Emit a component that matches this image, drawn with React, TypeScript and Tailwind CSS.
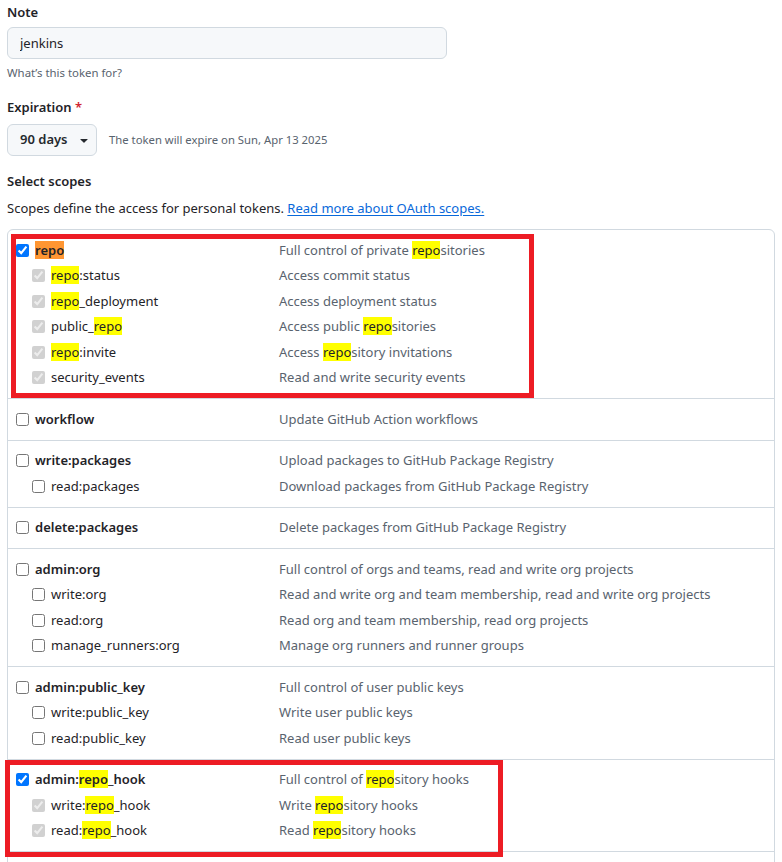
import type { ReactNode } from "react";

type Row = { name: string; desc: string; sub?: boolean; state?: "on" | "off" | "locked" };
type Group = { rows: Row[]; box?: "repo" | "hook" };

const groups: Group[] = [
  {
    box: "repo",
    rows: [
      { name: "{repo}", desc: "Full control of private [repo]sitories", state: "on" },
      { name: "[repo]:status", desc: "Access commit status", sub: true, state: "locked" },
      { name: "[repo]_deployment", desc: "Access deployment status", sub: true, state: "locked" },
      { name: "public_[repo]", desc: "Access public [repo]sitories", sub: true, state: "locked" },
      { name: "[repo]:invite", desc: "Access [repo]sitory invitations", sub: true, state: "locked" },
      { name: "security_events", desc: "Read and write security events", sub: true, state: "locked" },
    ],
  },
  { rows: [{ name: "workflow", desc: "Update GitHub Action workflows" }] },
  {
    rows: [
      { name: "write:packages", desc: "Upload packages to GitHub Package Registry" },
      { name: "read:packages", desc: "Download packages from GitHub Package Registry", sub: true },
    ],
  },
  { rows: [{ name: "delete:packages", desc: "Delete packages from GitHub Package Registry" }] },
  {
    rows: [
      { name: "admin:org", desc: "Full control of orgs and teams, read and write org projects" },
      { name: "write:org", desc: "Read and write org and team membership, read and write org projects", sub: true },
      { name: "read:org", desc: "Read org and team membership, read org projects", sub: true },
      { name: "manage_runners:org", desc: "Manage org runners and runner groups", sub: true },
    ],
  },
  {
    rows: [
      { name: "admin:public_key", desc: "Full control of user public keys" },
      { name: "write:public_key", desc: "Write user public keys", sub: true },
      { name: "read:public_key", desc: "Read user public keys", sub: true },
    ],
  },
  {
    box: "hook",
    rows: [
      { name: "admin:[repo]_hook", desc: "Full control of [repo]sitory hooks", state: "on" },
      { name: "write:[repo]_hook", desc: "Write [repo]sitory hooks", sub: true, state: "locked" },
      { name: "read:[repo]_hook", desc: "Read [repo]sitory hooks", sub: true, state: "locked" },
    ],
  },
];

// [repo] = yellow find match, {repo} = current (orange) match
function hl(text: string): ReactNode[] {
  return text.split(/(\[repo\]|\{repo\})/).map((part, i) => {
    if (part === "[repo]") return <mark key={i} className="bg-[#ffff00] text-[#1f2328]">repo</mark>;
    if (part === "{repo}") return <mark key={i} className="bg-[#ff9632] text-[#1f2328]">repo</mark>;
    return <span key={i}>{part}</span>;
  });
}

function ScopeRow({ row }: { row: Row }) {
  return (
    <div className="flex h-[25.5px] items-center">
      <label className={`flex w-[263px] shrink-0 items-center gap-[6px] ${row.sub ? "pl-4" : ""}`}>
        <input
          type="checkbox"
          className="m-0 h-[13px] w-[13px]"
          checked={row.state === "on" || row.state === "locked"}
          disabled={row.state === "locked"}
          readOnly
        />
        <span className={row.sub ? "text-[#1f2328]" : "font-semibold text-[#1f2328]"}>{hl(row.name)}</span>
      </label>
      <span className="text-[#59636e]">{hl(row.desc)}</span>
    </div>
  );
}

export default function App() {
  return (
    <div className="bg-white px-[7px] pt-[2px] text-[13px] text-[#1f2328] [font-family:'Noto_Sans',sans-serif]">
      <div className="font-semibold leading-[21px]">Note</div>
      <input
        className="mt-[4px] h-8 w-[440px] rounded-md border border-[#d1d9e0] bg-[#f6f8fa] px-3 text-[13px] text-[#1f2328] outline-none"
        defaultValue="jenkins"
      />
      <p className="mt-[5px] text-[11.4px] leading-[18px] text-[#59636e]">What’s this token for?</p>

      <div className="mt-[15px] font-semibold leading-[21px]">
        Expiration <span className="text-[#d1242f]">*</span>
      </div>
      <div className="mt-[6px] flex items-center gap-3">
        <button className="flex h-8 w-[90px] items-center gap-2 rounded-md border border-[#d1d9e0] bg-[#f6f8fa] pl-3 font-semibold text-[#25292e]">
          90 days
          <svg width="16" height="16" viewBox="0 0 16 16" fill="currentColor">
            <path d="m4.427 7.427 3.396 3.396a.25.25 0 0 0 .354 0l3.396-3.396A.25.25 0 0 0 11.396 7H4.604a.25.25 0 0 0-.177.427Z" />
          </svg>
        </button>
        <span className="text-[11.3px] text-[#59636e]">The token will expire on Sun, Apr 13 2025</span>
      </div>

      <div className="mt-[15px] font-semibold leading-[21px]">Select scopes</div>
      <p className="mt-[6px] leading-[21px]">
        Scopes define the access for personal tokens.{" "}
        <a className="text-[#0969da] underline underline-offset-2">Read more about OAuth scopes.</a>
      </p>

      <div className="mt-[10px] rounded-md border border-[#d1d9e0]">
        {groups.map((g, gi) => (
          <div
            key={gi}
            className={`relative px-2 py-[7.5px] ${gi > 0 ? "border-t border-[#d1d9e0]" : ""}`}
          >
            {g.rows.map((r, ri) => (
              <ScopeRow key={ri} row={r} />
            ))}
            {g.box === "repo" && (
              <div className="pointer-events-none absolute left-[3px] top-[4px] h-[164px] w-[523px] border-[5px] border-[#ed1c24]" />
            )}
            {g.box === "hook" && (
              <div className="pointer-events-none absolute left-[-3px] top-[0px] h-[97px] w-[498px] border-[5px] border-[#ed1c24]" />
            )}
          </div>
        ))}
        {/* next scope group begins just below the fold */}
        <div className="h-6 border-t border-[#d1d9e0]" />
      </div>
    </div>
  );
}
